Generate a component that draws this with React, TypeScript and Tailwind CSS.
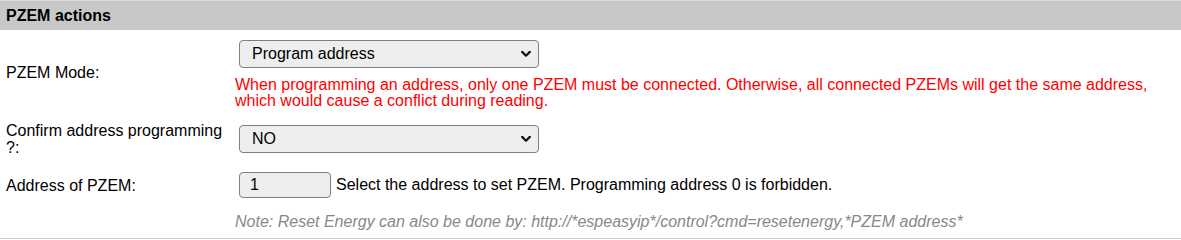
import React from "react";

function Chevron() {
  return (
    <svg
      className="pointer-events-none absolute right-[8px] top-1/2 -translate-y-1/2"
      width="10"
      height="7"
      viewBox="0 0 10 7"
    >
      <path d="M1.2 1.4 L5 5.2 L8.8 1.4" fill="none" stroke="#111" strokeWidth="2.2" strokeLinecap="round" strokeLinejoin="round" />
    </svg>
  );
}

function Select({ value, options }: { value: string; options: string[] }) {
  return (
    <div className="relative m-[4px] w-[300px]">
      <select
        defaultValue={value}
        className="h-[28px] w-full appearance-none rounded-[4px] border border-[#808080] bg-[#eeeeee] pl-[12px] pr-[24px] text-[16px] text-black outline-none"
      >
        {options.map((o) => (
          <option key={o}>{o}</option>
        ))}
      </select>
      <Chevron />
    </div>
  );
}

export default function App() {
  return (
    <div
      className="w-[1181px] bg-white text-[16px] text-black"
      style={{ fontFamily: '"Liberation Sans", Arial, sans-serif' }}
    >
      <div className="flex h-[30px] items-center border-t border-[#dadada] bg-[#c8c8c8] px-[6px] font-bold">
        PZEM actions
      </div>
      <div className="grid grid-cols-[235px_1fr] border-b border-[#c8c8c8]">
        {/* Row 1 */}
        <div className="flex items-center px-[6px]">PZEM Mode:</div>
        <div className="flex flex-col items-start pt-[6px] pb-[6px]">
          <Select value="Program address" options={["Program address", "Read value", "Reset energy"]} />
          <div className="mt-[5px] pr-[20px] leading-[16px] text-[#ff0000]">
            When programming an address, only one PZEM must be connected. Otherwise, all connected PZEMs will get the same address, which would cause a conflict during reading.
          </div>
        </div>
        {/* Row 2 */}
        <div className="flex items-center px-[6px] leading-[17px]">Confirm address programming ?:</div>
        <div className="flex flex-col items-start py-[6px]">
          <Select value="NO" options={["NO", "YES"]} />
        </div>
        {/* Row 3 */}
        <div className="flex items-center px-[6px]">Address of PZEM:</div>
        <div className="flex items-center pt-[5px] pb-[6px]">
          <input
            defaultValue="1"
            className="m-[4px] h-[26px] w-[92px] rounded-[4px] border border-[#808080] bg-[#eeeeee] px-[10px] text-[16px] text-black outline-none"
          />
          <span className="ml-[1px]">Select the address to set PZEM. Programming address 0 is forbidden.</span>
        </div>
        {/* Note row */}
        <div />
        <div className="flex h-[30px] items-center pb-[2px] italic text-[#888888]">
          Note: Reset Energy can also be done by: http://*espeasyip*/control?cmd=resetenergy,*PZEM address*
        </div>
      </div>
    </div>
  );
}
